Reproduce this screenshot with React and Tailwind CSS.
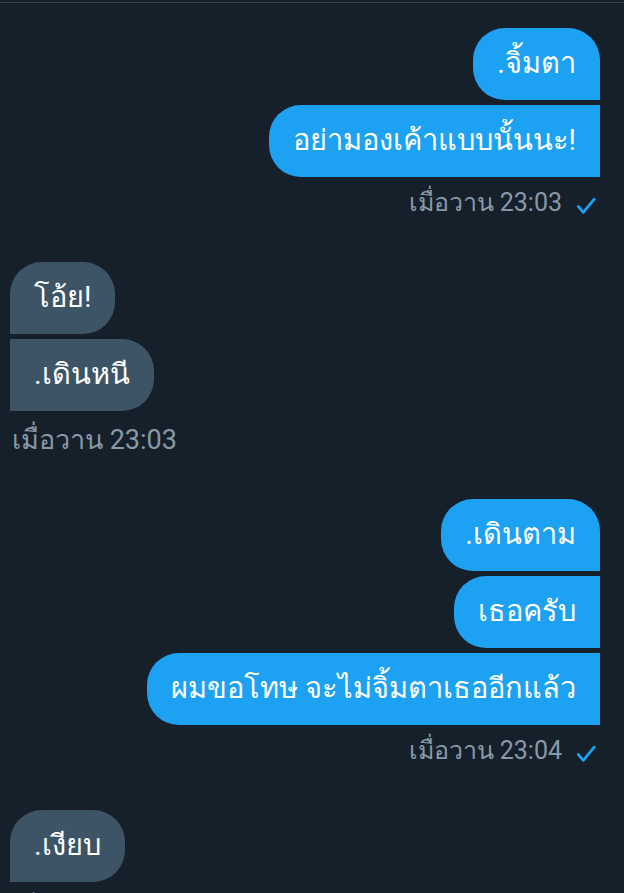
import React from 'react';

const font = { fontFamily: "Roboto, 'Noto Sans', 'DejaVu Sans', sans-serif" };

const groups = [
  {
    mine: true,
    messages: ['.จิ้มตา', 'อย่ามองเค้าแบบนั้นนะ!'],
    time: 'เมื่อวาน 23:03',
  },
  {
    mine: false,
    messages: ['โอ้ย!', '.เดินหนี'],
    time: 'เมื่อวาน 23:03',
  },
  {
    mine: true,
    messages: ['.เดินตาม', 'เธอครับ', 'ผมขอโทษ จะไม่จิ้มตาเธออีกแล้ว'],
    time: 'เมื่อวาน 23:04',
  },
  {
    mine: false,
    messages: ['.เงียบ'],
    time: 'เมื่อวาน 23:05',
  },
];

const Check = () => (
  <svg width="22" height="22" viewBox="0 0 24 24" className="ml-[13px] mt-[6px] shrink-0">
    <path d="M3.5 12.5l5.5 6.5L21 4.5" fill="none" stroke="#1da1f2" strokeWidth="3" strokeLinecap="round" strokeLinejoin="round" />
  </svg>
);

const Bubble = ({ text, mine, first }) => {
  let shape;
  if (mine) {
    shape = first ? 'rounded-[32px] rounded-br-none' : 'rounded-l-[32px]';
  } else {
    shape = first ? 'rounded-[32px] rounded-bl-none' : 'rounded-r-[32px]';
  }
  return (
    <div
      className={`h-[72px] flex items-center px-[24px] text-[29px] text-white whitespace-nowrap ${shape} ${mine ? 'bg-[#1da1f2]' : 'bg-[#3d5466]'}`}
    >
      {text}
    </div>
  );
};

export default function App() {
  return (
    <div className="w-[624px] h-[893px] overflow-hidden bg-[#15202b]" style={font}>
      <div className="h-[2px]" />
      <div className="h-px bg-[#38444d]" />
      <div className="flex flex-col pt-[25px] px-[10px] pr-[24px]">
        {groups.map((g, gi) => (
          <div key={gi} className={`flex flex-col mb-[43px] ${g.mine ? 'items-end' : 'items-start'}`}>
            <div className={`flex flex-col gap-[5px] ${g.mine ? 'items-end' : 'items-start'}`}>
              {g.messages.map((m, i) => (
                <Bubble key={i} text={m} mine={g.mine} first={i === 0} />
              ))}
            </div>
            <div className={`flex items-center h-[32px] text-[#8899a6] ${g.mine ? 'mt-[10px] mr-[3px] text-[25px]' : 'mt-[13px] ml-[2px] text-[27px]'}`}>
              <span>{g.time}</span>
              {g.mine && <Check />}
            </div>
          </div>
        ))}
      </div>
    </div>
  );
}
